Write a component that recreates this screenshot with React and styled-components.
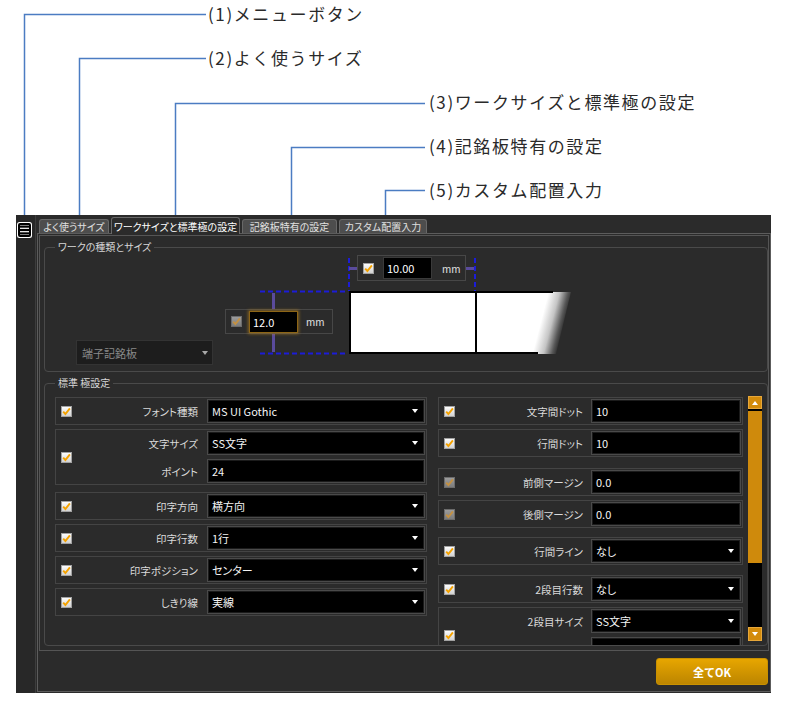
import styled, { createGlobalStyle, css } from "styled-components";

const GlobalStyle = createGlobalStyle`
  html, body {
    margin: 0;
    padding: 0;
    background: #ffffff;
  }
  body {
    font-family: "Noto Sans CJK JP", "Noto Sans", sans-serif;
  }
  *, *::before, *::after {
    box-sizing: border-box;
  }
`;

const Page = styled.div`
  width: 785px;
  height: 704px;
  overflow: hidden;
`;

/* ---------- callouts above the window ---------- */

const Annotations = styled.div`
  position: relative;
  height: 215px;
  padding-top: 4px;
`;

const LeaderLines = styled.svg`
  position: absolute;
  left: 0;
  top: 0;
`;

const Callout = styled.div`
  position: relative;
  height: 44px;
  padding-left: ${(p) => p.$indent}px;
  font-size: 17px;
  line-height: 20px;
  letter-spacing: 1.6px;
  color: #2a2a2a;
  white-space: nowrap;
`;

/* ---------- window chrome ---------- */

const AppWindow = styled.div`
  display: flex;
  width: 755px;
  height: 478px;
  margin-left: 16px;
  background: #2b2b2b;
  font-feature-settings: "palt";
`;

const SideBar = styled.div`
  width: 20px;
  flex-shrink: 0;
  padding: 7px 0 0 1px;
  background: #282828;
  border-right: 1px solid #3d3d3d;
`;

const MenuButton = styled.div`
  width: 15px;
  height: 16px;
  display: flex;
`;

const Main = styled.div`
  flex: 1;
  display: flex;
  flex-direction: column;
  padding: 2px 0 1px 1px;
`;

const TabBar = styled.div`
  display: flex;
  align-items: flex-end;
  gap: 2px;
  height: 16px;
  padding-left: 2px;
`;

const Tab = styled.div`
  position: relative;
  z-index: ${(p) => (p.$active ? 1 : 0)};
  width: ${(p) => p.$w}px;
  height: ${(p) => (p.$active ? 17 : 14)}px;
  margin-bottom: ${(p) => (p.$active ? -1 : 0)}px;
  display: flex;
  align-items: center;
  justify-content: center;
  background: ${(p) => (p.$active ? "#2b2b2b" : "#4d4d4d")};
  border: 1px solid #686868;
  border-bottom: none;
  border-radius: 3px 3px 0 0;
  color: ${(p) => (p.$active ? "#ffffff" : "#e0e0e0")};
  font-size: 10px;
  white-space: nowrap;
`;

const Frame = styled.div`
  flex: 1;
  display: flex;
  flex-direction: column;
  padding: 1px 1px 0 1px;
  border: 1px solid #5c5c5c;
`;

const Panel = styled.div`
  height: 416px;
  display: flex;
  flex-direction: column;
  padding: 0 0 0 4px;
  border: 1px solid #555555;
`;

const Footer = styled.div`
  flex: 1;
  display: flex;
  justify-content: flex-end;
  align-items: flex-start;
  padding: 7px 1px 0 0;
`;

const OkButton = styled.button`
  width: 112px;
  height: 27px;
  padding: 0;
  background: linear-gradient(#e7a600, #bc8500);
  border: 1px solid #c99100;
  border-radius: 3px;
  color: #ffffff;
  font-family: inherit;
  font-size: 11px;
  font-weight: bold;
`;

/* ---------- group boxes ---------- */

const GroupBox = styled.fieldset`
  height: ${(p) => p.$h}px;
  min-width: 0;
  margin: 4px 0 0;
  padding: 0;
  border: 1px solid #4a4a4a;
  border-radius: 4px;
`;

const GroupTitle = styled.legend`
  margin-left: 10px;
  padding: 0 3px;
  font-size: 10px;
  line-height: 14px;
  color: #d8d8d8;
`;

/* ---------- work kind & size ---------- */

const WorkBody = styled.div`
  display: flex;
  align-items: flex-start;
  height: 116px;
  padding: 1px 0 0 31px;
`;

const KindSelect = styled.div`
  position: relative;
  align-self: flex-end;
  width: 137px;
  height: 25px;
  margin-bottom: 5px;
  display: flex;
  align-items: center;
  padding-left: 5px;
  background: #1d1d1d;
  border: 1px solid #333333;
  color: #8a8a8a;
  font-size: 11px;

  &::after {
    content: "";
    position: absolute;
    right: 4px;
    top: 10px;
    border-left: 3.5px solid transparent;
    border-right: 3.5px solid transparent;
    border-top: 4px solid #a8a8a8;
  }
`;

const Diagram = styled.div`
  position: relative;
  width: 346px;
  height: 100px;
  margin-left: 12px;
`;

const DiagramLines = styled.svg`
  position: absolute;
  left: 0;
  top: 0;
`;

const SizeBox = styled.div`
  position: absolute;
  left: ${(p) => p.$x}px;
  top: ${(p) => p.$y}px;
  width: ${(p) => p.$w}px;
  height: ${(p) => p.$h}px;
  display: flex;
  align-items: center;
  gap: ${(p) => p.$gap}px;
  padding-left: 5px;
  background: #2b2b2b;
  border: 1px solid #474747;
`;

const SizeField = styled.div`
  width: 49px;
  height: 22px;
  display: flex;
  align-items: center;
  padding-left: 3px;
  background: #000000;
  border: 1px solid ${(p) => (p.$focus ? "#8d6516" : "#3a3a3a")};
  box-shadow: ${(p) =>
    p.$focus ? "0 0 3px 1px rgba(196, 138, 30, 0.55)" : "none"};
  color: #ffffff;
  font-size: 11px;
`;

const Unit = styled.span`
  margin-left: 1px;
  color: #e2e2e2;
  font-size: 10px;
`;

/* ---------- standard pole settings ---------- */

const SettingsBody = styled.div`
  display: flex;
  align-items: flex-start;
  height: 255px;
  padding: 7px 0 0 10px;
  overflow: hidden;
`;

const Column = styled.div`
  width: ${(p) => p.$w}px;
  margin-left: ${(p) => p.$ml || 0}px;
  flex-shrink: 0;
`;

const RowBox = styled.div`
  display: grid;
  grid-template-columns: 22px 1fr;
  align-items: center;
  margin-top: ${(p) => p.$mt}px;
  padding: 1px 1px 1px 0;
  border: 1px solid #444444;
`;

const Lines = styled.div`
  display: flex;
  flex-direction: column;
  gap: 4px;
`;

const Line = styled.div`
  display: grid;
  grid-template-columns: 1fr ${(p) => p.$fw}px;
  column-gap: ${(p) => p.$gap}px;
  align-items: center;
`;

const Label = styled.span`
  text-align: right;
  font-size: 10.5px;
  color: #dadada;
  white-space: nowrap;
`;

const Field = styled.div`
  position: relative;
  height: 24px;
  display: flex;
  align-items: center;
  padding-left: 4px;
  background: #000000;
  border: 1px solid #4a4a4a;
  box-shadow: inset 0 0 0 1px #1b1b1b;
  color: #f4f4f4;
  font-size: 11px;
  white-space: nowrap;

  ${(p) =>
    p.$select &&
    css`
      &::after {
        content: "";
        position: absolute;
        right: 6px;
        top: 9px;
        border-left: 3.5px solid transparent;
        border-right: 3.5px solid transparent;
        border-top: 4px solid #ffffff;
      }
    `}
`;

const CheckFrame = styled.span`
  width: 11px;
  height: 11px;
  display: inline-flex;
  align-items: center;
  justify-content: center;
  flex-shrink: 0;
  margin-left: ${(p) => p.$ml || 0}px;
  border: 1px solid ${(p) => (p.$disabled ? "#6c6c6c" : "#a2a2a2")};
  background: ${(p) =>
    p.$disabled
      ? "linear-gradient(#9c9c9c, #7c7c7c)"
      : "linear-gradient(#fcfcfc, #d2d2d2)"};
`;

const ScrollBar = styled.div`
  width: 14px;
  height: 245px;
  margin: -1px 0 0 5px;
  flex-shrink: 0;
  display: flex;
  flex-direction: column;
  background: #000000;
`;

const ScrollButton = styled.div`
  height: ${(p) => (p.$dir === "up" ? 13 : 14)}px;
  display: flex;
  align-items: center;
  justify-content: center;
  background: #d38b0b;
  border: 1px solid #e7a73a;

  &::after {
    content: "";
    border-left: 3.5px solid transparent;
    border-right: 3.5px solid transparent;
    ${(p) =>
      p.$dir === "up"
        ? "border-bottom: 4px solid #ffffff;"
        : "border-top: 4px solid #ffffff;"}
  }
`;

const ScrollThumb = styled.div`
  height: 152px;
  margin-top: 2px;
  background: #cf8a0c;
`;

const ScrollTrack = styled.div`
  flex: 1;
`;

/* ---------- data ---------- */

const CALLOUTS = [
  { text: "(1)メニューボタン", indent: 208 },
  { text: "(2)よく使うサイズ", indent: 208 },
  { text: "(3)ワークサイズと標準極の設定", indent: 429 },
  { text: "(4)記銘板特有の設定", indent: 429 },
  { text: "(5)カスタム配置入力", indent: 429 },
];

const LEADERS = [
  "M24.5 215 V14.5 H206",
  "M79.5 215 V58.5 H206",
  "M175.5 215 V103.5 H425",
  "M291.5 215 V147.5 H425",
  "M385.5 215 V190.5 H425",
];

const TABS = [
  { label: "よく使うサイズ", w: 70 },
  { label: "ワークサイズと標準極の設定", w: 129, active: true },
  { label: "記銘板特有の設定", w: 95 },
  { label: "カスタム配置入力", w: 88 },
];

const LEFT_ROWS = [
  { mt: 0, lines: [{ label: "フォント種類", value: "MS UI Gothic", select: true }] },
  {
    mt: 4,
    lines: [
      { label: "文字サイズ", value: "SS文字", select: true },
      { label: "ポイント", value: "24" },
    ],
  },
  { mt: 7, lines: [{ label: "印字方向", value: "横方向", select: true }] },
  { mt: 4, lines: [{ label: "印字行数", value: "1行", select: true }] },
  { mt: 4, lines: [{ label: "印字ポジション", value: "センター", select: true }] },
  { mt: 4, lines: [{ label: "しきり線", value: "実線", select: true }] },
];

const RIGHT_ROWS = [
  { mt: 0, lines: [{ label: "文字間ドット", value: "10" }] },
  { mt: 4, lines: [{ label: "行間ドット", value: "10" }] },
  { mt: 11, disabled: true, lines: [{ label: "前側マージン", value: "0.0" }] },
  { mt: 4, disabled: true, lines: [{ label: "後側マージン", value: "0.0" }] },
  { mt: 9, lines: [{ label: "行間ライン", value: "なし", select: true }] },
  { mt: 10, lines: [{ label: "2段目行数", value: "なし", select: true }] },
  {
    mt: 4,
    lines: [
      { label: "2段目サイズ", value: "SS文字", select: true },
      { label: "", value: "" },
    ],
  },
];

/* ---------- pieces ---------- */

const CheckBox = ({ disabled, ml }) => (
  <CheckFrame $disabled={disabled} $ml={ml}>
    <svg width="9" height="9" viewBox="0 0 9 9">
      <path
        d="M1.2 4.6 L3.4 7 L7.9 1.4"
        fill="none"
        stroke={disabled ? "#c49142" : "#f4a200"}
        strokeWidth="1.9"
      />
    </svg>
  </CheckFrame>
);

const SettingRow = ({ row, fieldWidth, gap }) => (
  <RowBox $mt={row.mt}>
    <CheckBox disabled={row.disabled} ml={5} />
    <Lines>
      {row.lines.map((line, i) => (
        <Line key={i} $fw={fieldWidth} $gap={gap}>
          <Label>{line.label}</Label>
          <Field $select={line.select}>{line.value}</Field>
        </Line>
      ))}
    </Lines>
  </RowBox>
);

const MenuIcon = () => (
  <svg width="15" height="16" viewBox="0 0 15 16">
    <rect x="0" y="0" width="15" height="16" rx="2.5" fill="#ffffff" />
    <rect x="1" y="1" width="13" height="14" rx="2" fill="#000000" />
    <rect x="3" y="3" width="9" height="10" fill="#ffffff" />
    <rect x="3" y="3.5" width="9" height="2.2" fill="#000000" />
    <rect x="3" y="6.9" width="9" height="2.2" fill="#000000" />
    <rect x="3" y="10.3" width="9" height="2.2" fill="#000000" />
  </svg>
);

const WorkDiagram = () => (
  <Diagram>
    <DiagramLines width="346" height="100" viewBox="0 0 346 100">
      <defs>
        <linearGradient
          id="plateFade"
          gradientUnits="userSpaceOnUse"
          x1="316"
          y1="66"
          x2="339"
          y2="72"
        >
          <stop offset="0" stopColor="#ffffff" />
          <stop offset="0.45" stopColor="#c4c4c4" />
          <stop offset="0.8" stopColor="#585858" />
          <stop offset="1" stopColor="#2b2b2b" />
        </linearGradient>
      </defs>
      <polygon points="124,37 346,37 331,99 124,99" fill="url(#plateFade)" />
      <path d="M124 37 H328 M124 98 H313" stroke="#000" strokeWidth="2" />
      <path d="M125 36 V99 M251 37 V98" stroke="#000" strokeWidth="2" />
      <g stroke="#1c1cd8" strokeWidth="2" strokeDasharray="5 3" fill="none">
        <path d="M124 3 V36" />
        <path d="M250 3 V36" />
        <path d="M35 36.5 H123" />
        <path d="M35 98.5 H123" />
      </g>
      <g stroke="#5a4b9c" strokeWidth="3" fill="none">
        <path d="M124 13.5 H132" />
        <path d="M241 13.5 H249" />
        <path d="M48.5 38 V54" />
        <path d="M48.5 79 V97" />
      </g>
    </DiagramLines>

    <SizeBox $x={132} $y={0} $w={109} $h={26} $gap={9}>
      <CheckBox />
      <SizeField>10.00</SizeField>
      <Unit>mm</Unit>
    </SizeBox>

    <SizeBox $x={0} $y={54} $w={108} $h={25} $gap={7}>
      <CheckBox disabled />
      <SizeField $focus>12.0</SizeField>
      <Unit>mm</Unit>
    </SizeBox>
  </Diagram>
);

export default function App() {
  return (
    <Page>
      <GlobalStyle />

      <Annotations>
        <LeaderLines width="785" height="215" viewBox="0 0 785 215">
          {LEADERS.map((d) => (
            <path key={d} d={d} fill="none" stroke="#4b7cc2" strokeWidth="1.5" />
          ))}
        </LeaderLines>
        {CALLOUTS.map((c) => (
          <Callout key={c.text} $indent={c.indent}>
            {c.text}
          </Callout>
        ))}
      </Annotations>

      <AppWindow>
        <SideBar>
          <MenuButton>
            <MenuIcon />
          </MenuButton>
        </SideBar>

        <Main>
          <TabBar>
            {TABS.map((t) => (
              <Tab key={t.label} $w={t.w} $active={t.active}>
                {t.label}
              </Tab>
            ))}
          </TabBar>

          <Frame>
            <Panel>
              <GroupBox $h={132}>
                <GroupTitle>ワークの種類とサイズ</GroupTitle>
                <WorkBody>
                  <KindSelect>端子記銘板</KindSelect>
                  <WorkDiagram />
                </WorkBody>
              </GroupBox>

              <GroupBox $h={270}>
                <GroupTitle>標準 極設定</GroupTitle>
                <SettingsBody>
                  <Column $w={372}>
                    {LEFT_ROWS.map((row, i) => (
                      <SettingRow key={i} row={row} fieldWidth={218} gap={9} />
                    ))}
                  </Column>
                  <Column $w={305} $ml={11}>
                    {RIGHT_ROWS.map((row, i) => (
                      <SettingRow key={i} row={row} fieldWidth={150} gap={8} />
                    ))}
                  </Column>
                  <ScrollBar>
                    <ScrollButton $dir="up" />
                    <ScrollThumb />
                    <ScrollTrack />
                    <ScrollButton $dir="down" />
                  </ScrollBar>
                </SettingsBody>
              </GroupBox>
            </Panel>

            <Footer>
              <OkButton>全てOK</OkButton>
            </Footer>
          </Frame>
        </Main>
      </AppWindow>
    </Page>
  );
}
